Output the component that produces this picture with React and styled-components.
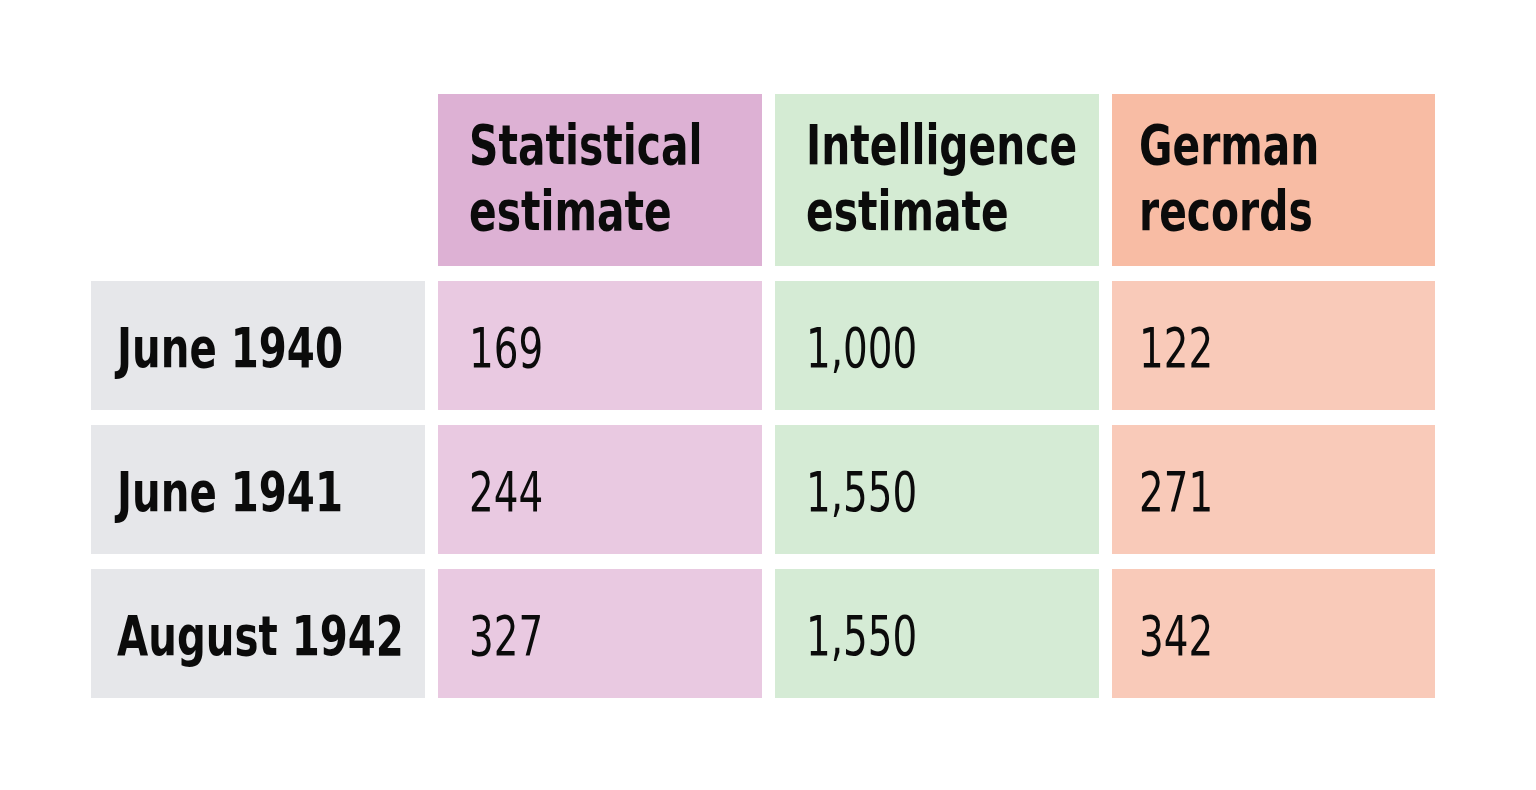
import React from "react";
import styled, { createGlobalStyle } from "styled-components";

const GlobalStyle = createGlobalStyle`
  body {
    margin: 0;
    background: #ffffff;
    font-family: "DejaVu Sans Condensed", "Liberation Sans", sans-serif;
  }
`;

const Page = styled.div`
  padding: 94px 0 0 91px;
  height: 790px;
  box-sizing: border-box;
`;

const Grid = styled.div`
  display: grid;
  grid-template-columns: 334px 324px 324px 323px;
  grid-template-rows: 172px 129px 129px 129px;
  column-gap: 13px;
  row-gap: 15px;
`;

const palette = {
  pink: { head: "#ddb1d4", body: "#e9c9e1" },
  green: { head: "#d4ebd3", body: "#d5ebd5" },
  orange: { head: "#f8bca4", body: "#f9cab9" },
};

const Cell = styled.div`
  display: flex;
  align-items: center;
  padding-left: ${(p) => p.$pad || 31}px;
  color: #0b0b0b;
  background: ${(p) => p.$bg || "transparent"};
  overflow: hidden;
`;

// the reference face is a narrow grotesque; squeeze DejaVu Condensed to match
const Narrow = styled.div`
  white-space: nowrap;
  transform: scaleX(${(p) => p.$sx || 0.8});
  transform-origin: left center;
`;

const HeadText = styled(Narrow)`
  font-weight: 700;
  font-size: 56px;
  line-height: 66px;
  padding-bottom: 4px;
`;

const LabelText = styled(Narrow)`
  font-weight: 700;
  font-size: 56px;
  padding-top: 4px;
`;

const ValueText = styled(Narrow)`
  font-weight: 400;
  font-size: 55px;
  padding-top: 4px;
`;

const columns = [
  { key: "pink", title: ["Statistical", "estimate"], pad: 31 },
  { key: "green", title: ["Intelligence", "estimate"], pad: 31 },
  { key: "orange", title: ["German", "records"], pad: 27 },
];

const rows = [
  { label: "June 1940", values: ["169", "1,000", "122"] },
  { label: "June 1941", values: ["244", "1,550", "271"] },
  { label: "August 1942", values: ["327", "1,550", "342"] },
];

function App() {
  return (
    <Page>
      <GlobalStyle />
      <Grid>
        <Cell />
        {columns.map((c) => (
          <Cell key={c.key} $bg={palette[c.key].head} $pad={c.pad}>
            <HeadText $sx={0.81}>
              {c.title[0]}
              <br />
              {c.title[1]}
            </HeadText>
          </Cell>
        ))}
        {rows.map((r) => (
          <React.Fragment key={r.label}>
            <Cell $bg="#e6e7ea" $pad={26}>
              <LabelText>{r.label}</LabelText>
            </Cell>
            {r.values.map((v, i) => (
              <Cell key={i} $bg={palette[columns[i].key].body} $pad={columns[i].pad}>
                <ValueText $sx={0.785}>{v}</ValueText>
              </Cell>
            ))}
          </React.Fragment>
        ))}
      </Grid>
    </Page>
  );
}

export default App;
